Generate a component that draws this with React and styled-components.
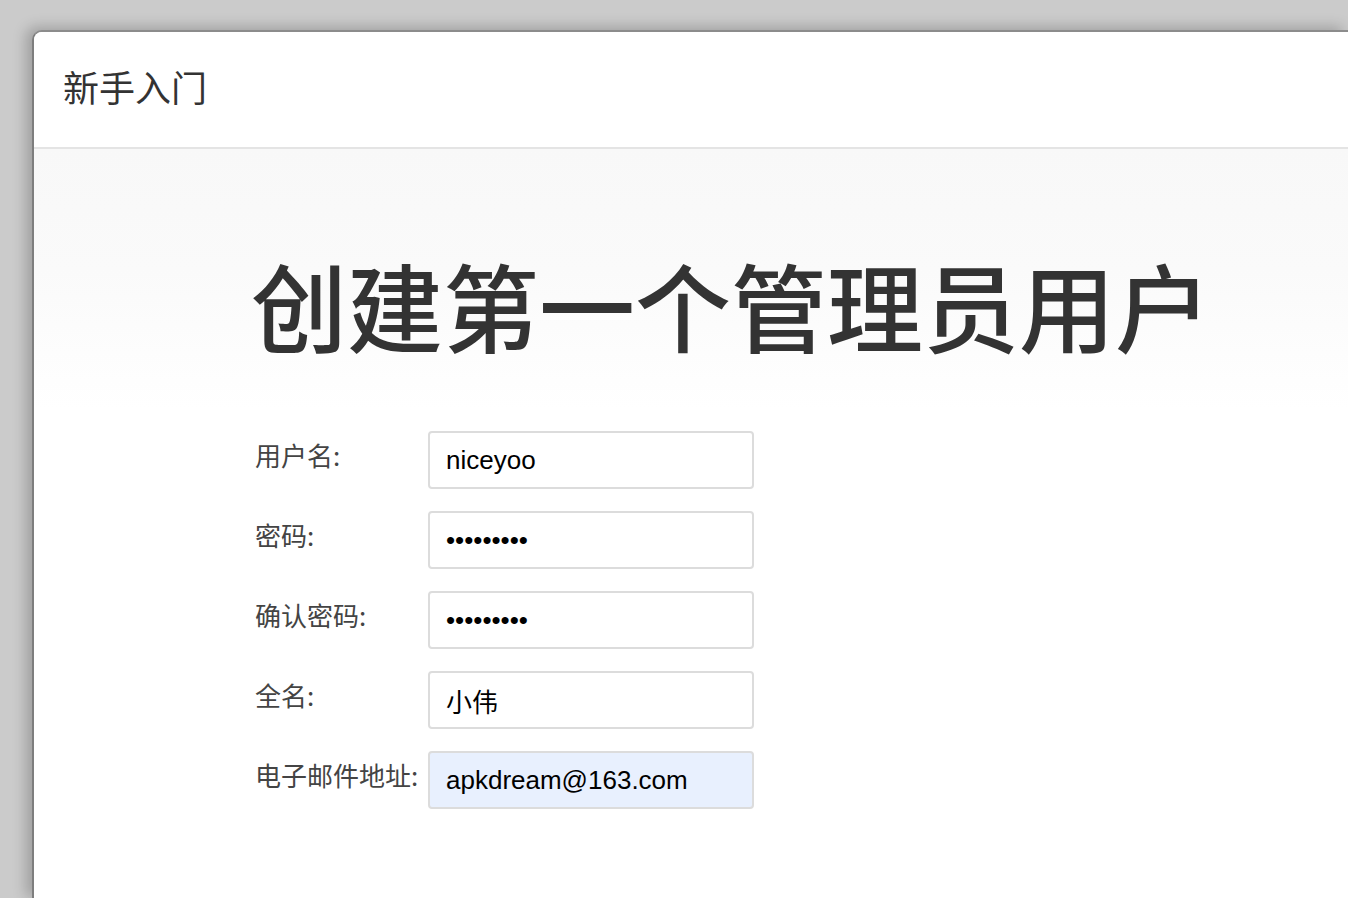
import React from 'react'
import styled, { createGlobalStyle } from 'styled-components'

const GlobalStyle = createGlobalStyle`
  html, body {
    margin: 0;
    padding: 0;
    height: 100%;
    overflow: hidden;
    background: #cbcbcb;
    font-family: "Noto Sans CJK SC", "Liberation Sans", sans-serif;
  }
`

const Desk = styled.div`
  height: 898px;
  padding: 30px 0 0 32px;
  box-sizing: border-box;
  overflow: hidden;
`

const Window = styled.div`
  height: 100%;
  background: #fff;
  border-top: 2px solid #8c8c8c;
  border-left: 2px solid #7e7e7e;
  border-top-left-radius: 10px;
  box-shadow: -6px -3px 14px rgba(0, 0, 0, 0.22);
  overflow: hidden;
  display: flex;
  flex-direction: column;
`

const Header = styled.header`
  height: 117px;
  box-sizing: border-box;
  flex: none;
  display: flex;
  align-items: center;
  padding: 0 0 8px 29px;
  border-bottom: 2px solid #e4e4e4;
  background: #fff;
`

const HeaderTitle = styled.h1`
  margin: 0;
  font-size: 36px;
  font-weight: 400;
  line-height: 1;
  color: #333;
`

const Body = styled.main`
  flex: 1;
  background: linear-gradient(to bottom, #f8f8f8 0, #fafafa 120px, #ffffff 260px);
  padding: 107px 0 0 217px;
`

const Heading = styled.h2`
  margin: 0 0 79px;
  font-size: 96px;
  font-weight: 500;
  line-height: 1;
  color: #333;
`

const Form = styled.form`
  display: flex;
  flex-direction: column;
  gap: 22px;
  padding-left: 4px;
`

const Row = styled.div`
  display: flex;
  align-items: flex-start;
`

const Label = styled.label`
  width: 173px;
  flex: none;
  padding-top: 8px;
  font-size: 26px;
  line-height: 32px;
  color: #444;
  white-space: nowrap;
`

const Input = styled.input`
  width: 326px;
  height: 58px;
  box-sizing: border-box;
  border: 2px solid #dcdcdc;
  border-radius: 4px;
  padding: 0 0 0 16px;
  font-family: "Liberation Sans", "Noto Sans CJK SC", sans-serif;
  font-size: 26px;
  color: #000;
  background: ${p => (p.$filled ? '#e8f0fe' : '#fff')};
  outline: none;
`

const fields = [
  { label: '用户名:', type: 'text', value: 'niceyoo' },
  { label: '密码:', type: 'password', value: 'niceyoo12' },
  { label: '确认密码:', type: 'password', value: 'niceyoo12' },
  { label: '全名:', type: 'text', value: '小伟' },
  { label: '电子邮件地址:', type: 'email', value: 'apkdream@163.com', filled: true },
]

export default function App() {
  return (
    <>
      <GlobalStyle />
      <Desk>
        <Window>
          <Header>
            <HeaderTitle>新手入门</HeaderTitle>
          </Header>
          <Body>
            <Heading>创建第一个管理员用户</Heading>
            <Form onSubmit={e => e.preventDefault()}>
              {fields.map((f, i) => (
                <Row key={i}>
                  <Label>{f.label}</Label>
                  <Input type={f.type} defaultValue={f.value} $filled={f.filled} readOnly />
                </Row>
              ))}
            </Form>
          </Body>
        </Window>
      </Desk>
    </>
  )
}
